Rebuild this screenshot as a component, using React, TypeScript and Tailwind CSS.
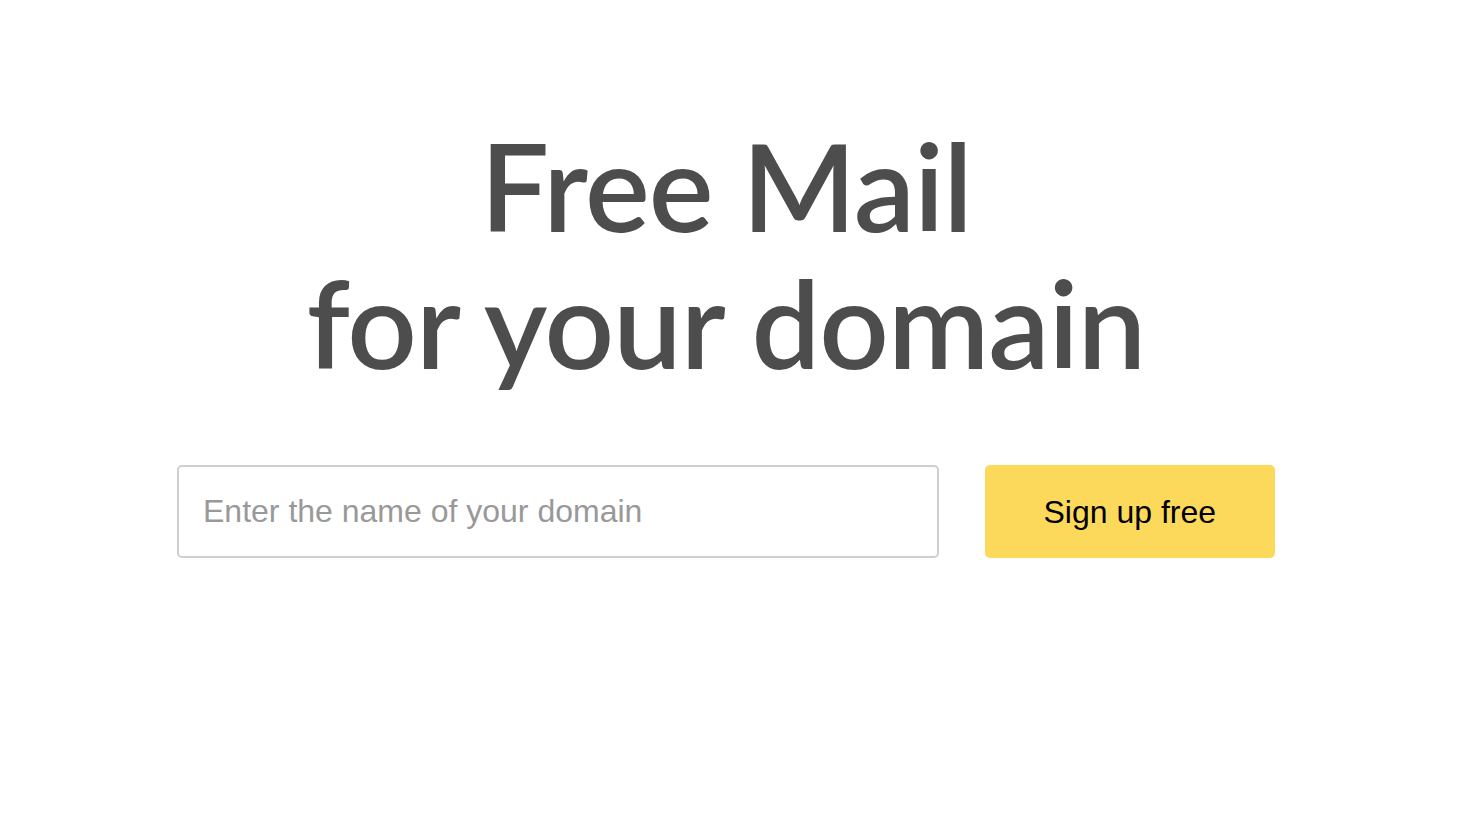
export default function App() {
  return (
    <div className="min-h-[824px] bg-white">
      <div className="w-[1452px]">
        <div className="mx-auto w-[1098px] pt-[117px]">
          <h1
            className="text-center text-[122px] font-semibold leading-[137px] tracking-[-1px] text-[#4d4d4d]"
            style={{ fontFamily: 'Lato, "Open Sans", sans-serif' }}
          >
            Free Mail
            <br />
            for your domain
          </h1>

          <form
            className="mt-[74px] flex gap-[46px]"
            onSubmit={(e) => e.preventDefault()}
            style={{ fontFamily: '"Liberation Sans", Arial, sans-serif' }}
          >
            <input
              type="text"
              placeholder="Enter the name of your domain"
              className="h-[93px] w-[763px] rounded-[5px] border-2 border-[#cfcfcf] px-[24px] text-[32px] text-[#333] outline-none placeholder:text-[#999]"
            />
            <button
              type="submit"
              className="h-[93px] w-[291px] rounded-[5px] bg-[#fcd95a] text-[32px] text-black"
            >
              Sign up free
            </button>
          </form>
        </div>
      </div>
    </div>
  );
}
